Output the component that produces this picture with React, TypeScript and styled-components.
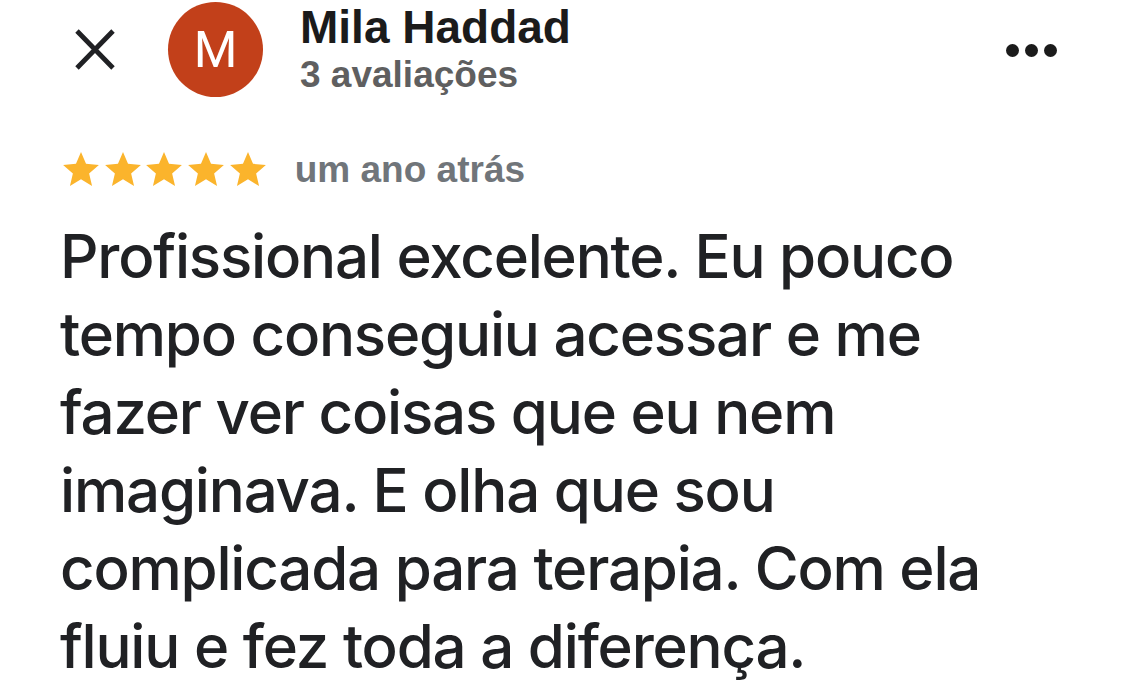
import styled, { createGlobalStyle } from "styled-components";

const GlobalStyle = createGlobalStyle`
  html, body {
    margin: 0;
    padding: 0;
    background: #ffffff;
  }
  body {
    font-family: "Liberation Sans", Arial, sans-serif;
    color: #202124;
  }
`;

const reviewLines = [
  "Profissional excelente. Eu pouco",
  "tempo conseguiu acessar e me",
  "fazer ver coisas que eu nem",
  "imaginava. E olha que sou",
  "complicada para terapia. Com ela",
  "fluiu e fez toda a diferença.",
];

const StarIcon = () => (
  <svg width="36" height="34" viewBox="2 2 20 19" aria-hidden="true">
    <path
      fill="#fbb42c"
      d="M12 17.27L18.18 21l-1.64-7.03L22 9.24l-7.19-.61L12 2 9.19 8.63 2 9.24l5.46 4.73L5.82 21z"
    />
  </svg>
);

const CloseIcon = () => (
  <svg width="42" height="43" viewBox="0 0 42 43" aria-hidden="true">
    <path
      d="M3 3L39 40M39 3L3 40"
      stroke="#202124"
      strokeWidth="4.8"
      strokeLinecap="butt"
      fill="none"
    />
  </svg>
);

export default function App() {
  return (
    <>
      <GlobalStyle />
      <Page>
        <Header>
          <CloseButton>
            <CloseIcon />
          </CloseButton>
          <Avatar>M</Avatar>
          <NameBlock>
            <Name>Mila Haddad</Name>
            <ReviewCount>3 avaliações</ReviewCount>
          </NameBlock>
          <MoreButton>
            <Dot />
            <Dot />
            <Dot />
          </MoreButton>
        </Header>

        <RatingRow>
          <Stars>
            {[0, 1, 2, 3, 4].map((i) => (
              <StarIcon key={i} />
            ))}
          </Stars>
          <When>um ano atrás</When>
        </RatingRow>

        <ReviewText>
          {reviewLines.map((line) => (
            <Line key={line}>{line}</Line>
          ))}
        </ReviewText>
      </Page>
    </>
  );
}

const Page = styled.div`
  width: 1125px;
  height: 698px;
  overflow: hidden;
  display: flex;
  flex-direction: column;
`;

const Header = styled.div`
  display: flex;
  align-items: flex-start;
  height: 100px;
  padding-left: 74px;
  padding-right: 68px;
`;

const CloseButton = styled.div`
  margin-top: 28px;
  width: 42px;
  height: 43px;
  display: flex;
`;

const Avatar = styled.div`
  margin-left: 52px;
  margin-top: 2px;
  width: 95px;
  height: 95px;
  border-radius: 50%;
  background: #c2401a;
  color: #ffffff;
  font-family: Roboto, "Liberation Sans", sans-serif;
  font-size: 50px;
  font-weight: 400;
  display: flex;
  align-items: center;
  justify-content: center;
`;

const NameBlock = styled.div`
  margin-left: 37px;
  margin-top: 3px;
  display: flex;
  flex-direction: column;
  gap: 2px;
`;

const Name = styled.div`
  font-size: 46px;
  line-height: 48px;
  font-weight: 700;
  color: #1b1b1b;
`;

const ReviewCount = styled.div`
  font-size: 37px;
  line-height: 44px;
  font-weight: 700;
  color: #5f5f60;
`;

const MoreButton = styled.div`
  margin-left: auto;
  margin-top: 44px;
  display: flex;
  gap: 6px;
`;

const Dot = styled.span`
  width: 13px;
  height: 13px;
  border-radius: 50%;
  background: #1b1b1b;
`;

const RatingRow = styled.div`
  display: flex;
  align-items: flex-start;
  margin-top: 50px;
  height: 40px;
  padding-left: 63px;
`;

const Stars = styled.div`
  display: flex;
  gap: 5.7px;
  margin-top: 2px;
`;

const When = styled.div`
  margin-left: 29px;
  font-size: 37px;
  line-height: 40px;
  font-weight: 700;
  color: #70757a;
`;

const ReviewText = styled.div`
  margin-top: 27px;
  padding-left: 60px;
  font-family: Inter, "Open Sans", sans-serif;
  font-size: 60px;
  line-height: 78px;
  font-weight: 500;
  letter-spacing: -1.2px;
  color: #202124;
`;

const Line = styled.div`
  white-space: nowrap;
`;
